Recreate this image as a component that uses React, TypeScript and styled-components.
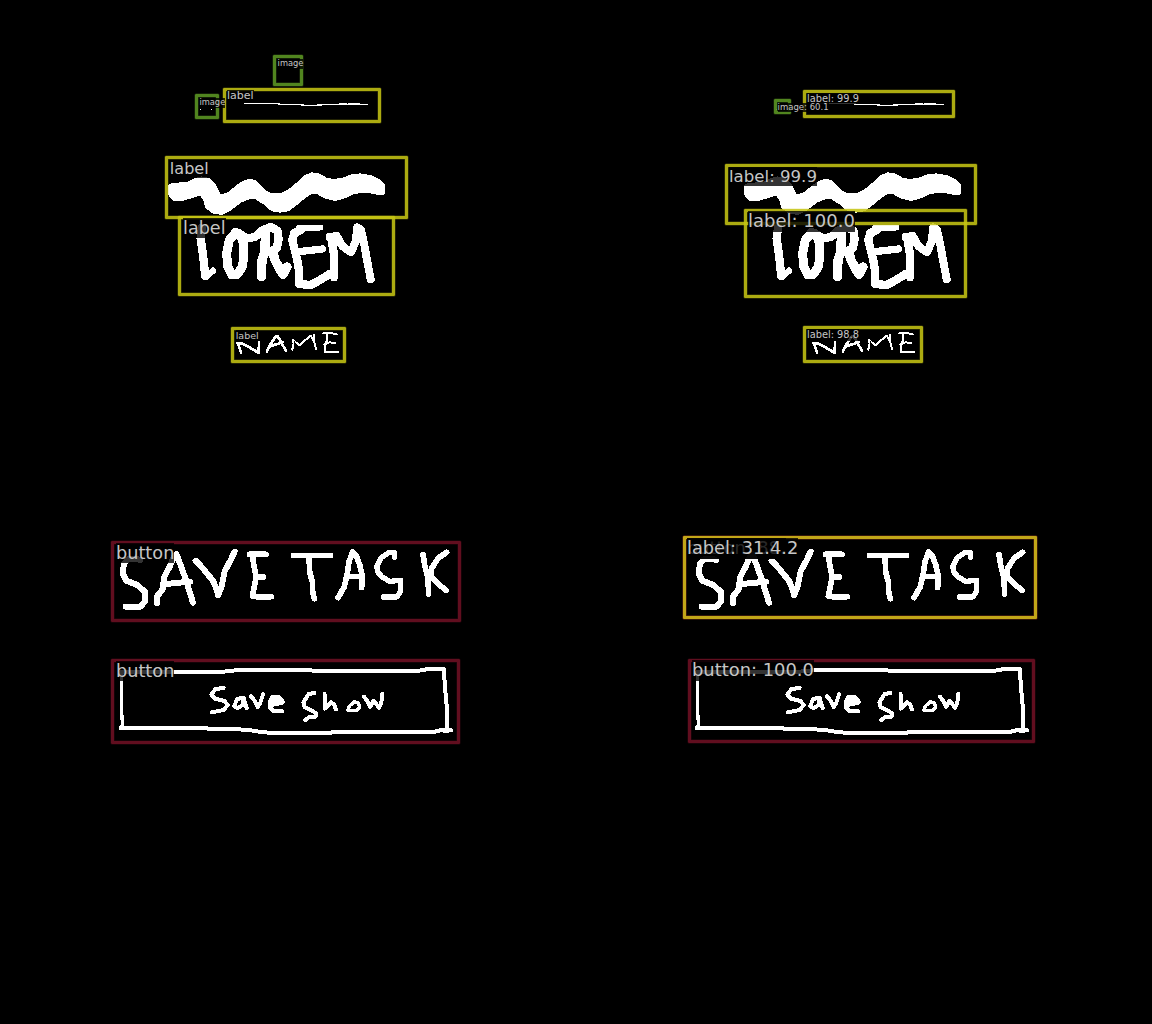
import React from "react";
import styled, { createGlobalStyle } from "styled-components";

const GlobalStyle = createGlobalStyle`
  body {
    margin: 0;
    background: #000;
  }
`;

const Board = styled.main`
  display: grid;
  grid-template-columns: 1fr 1fr;
  width: 1152px;
  height: 1024px;
  overflow: hidden;
  background: #000;
`;

const Panel = styled.section`
  position: relative;
  height: 1024px;
`;

const Drawing = styled.svg`
  display: block;
  width: 576px;
  height: 1024px;
  fill: none;
  stroke: #fff;
  stroke-linecap: round;
  stroke-linejoin: round;
  shape-rendering: crispEdges;
`;

type Kind = "image" | "label" | "button" | "mixed";

const outline: Record<Kind, string> = {
  image: "rgba(90, 148, 34, 0.9)",
  label: "rgba(198, 196, 20, 0.87)",
  button: "rgba(108, 16, 34, 0.9)",
  mixed: "#c2a618",
};

const halo: Record<Kind, string> = {
  image: "rgba(90, 148, 34, 0.4)",
  label: "rgba(198, 196, 20, 0.35)",
  button: "rgba(108, 16, 34, 0.4)",
  mixed: "rgba(130, 70, 16, 0.6)",
};

const Region = styled.div<{ $x: number; $y: number; $w: number; $h: number; $kind: Kind }>`
  position: absolute;
  box-sizing: border-box;
  left: ${(p) => p.$x}px;
  top: ${(p) => p.$y}px;
  width: ${(p) => p.$w}px;
  height: ${(p) => p.$h}px;
  border: 3px solid ${(p) => outline[p.$kind]};
  border-radius: 1px;
  box-shadow: 0 0 0 0.5px ${(p) => halo[p.$kind]}, inset 0 0 0 0.5px ${(p) => halo[p.$kind]};
`;

/* A caption is anchored by the left end of its baseline. */
const Tag = styled.span<{ $x: number; $base: number; $size: number }>`
  position: absolute;
  left: ${(p) => p.$x}px;
  top: ${(p) => p.$base - p.$size * 0.928}px;
  font-family: "DejaVu Sans", Verdana, sans-serif;
  font-size: ${(p) => p.$size}px;
  line-height: 1.164;
  white-space: pre;
  color: #c6c6c6;
  background: rgba(0, 0, 0, 0.8);
`;

interface Mark {
  kind: Kind;
  box: [number, number, number, number];
  text: string;
  at: [number, number];
  size: number;
}

const truth: Mark[] = [
  { kind: "image", box: [273, 55, 30, 31], text: "image", at: [277.6, 66.6], size: 8.3 },
  { kind: "label", box: [223, 88, 158, 35], text: "label", at: [227, 100.7], size: 11 },
  { kind: "image", box: [195, 94, 24, 25], text: "image", at: [199.4, 105.8], size: 8.3 },
  { kind: "label", box: [165, 156, 243, 63], text: "label", at: [169.8, 174.6], size: 16.1 },
  { kind: "label", box: [178, 216, 217, 80], text: "label", at: [183, 234], size: 17.6 },
  { kind: "label", box: [231, 327, 115, 36], text: "label", at: [235.7, 339], size: 9.5 },
  { kind: "button", box: [111, 541, 350, 81], text: "button", at: [116, 559], size: 17.7 },
  { kind: "button", box: [111, 659, 349, 85], text: "button", at: [116, 677], size: 17.7 },
];

const predicted: Mark[] = [
  { kind: "label", box: [227, 90, 152, 28], text: "label: 99.9", at: [231, 102], size: 9.8 },
  { kind: "image", box: [198, 99, 17, 15], text: "image: 60.1", at: [201.6, 110.4], size: 8.5 },
  { kind: "label", box: [149, 164, 252, 61], text: "label: 99.9", at: [153, 182.2], size: 16.6 },
  { kind: "label", box: [168, 209, 223, 89], text: "label: 100.0", at: [172, 227.8], size: 18 },
  { kind: "label", box: [227, 326, 120, 37], text: "label: 98.8", at: [231, 338.5], size: 9.8 },
  { kind: "button", box: [107, 536, 354, 83], text: "button: 88.", at: [111, 555], size: 17.8 },
  { kind: "mixed", box: [107, 536, 354, 83], text: "label: 31.4.2", at: [111, 555], size: 17.8 },
  { kind: "button", box: [112, 659, 347, 84], text: "button: 100.0", at: [116, 677], size: 17.9 },
];

/* Pen strokes of the wireframe sketch, each group drawn at three times its size. */
const third = (x: number, y: number) => `translate(${x} ${y}) scale(0.33333)`;

const Sketch = () => (
  <Drawing viewBox="0 0 576 1024" aria-hidden="true">
    <g transform={third(155, 45)} strokeWidth="3.4" strokeLinecap="butt">
      <path d="M267 176.5H376M369 178.5H390M387 178.5H446M438 181.5H500M485 178.5H560M552 175.5H575M562 178.5H640M578 175.5H614" />
      <path d="M135 193H139M168 193H172" />
    </g>
    <g transform={third(155, 145)}>
      <path
        fill="#fff"
        stroke="none"
        d="M38 122L50 113L95 112L115 101L140 94L165 100L180 115L190 135L197 148L215 144L250 116L270 105L290 101L305 108L330 135L350 145L375 145L400 133L430 108L450 90L470 82L490 84L515 98L535 102L560 99L590 88L615 85L650 91L672 102L688 115L691 130L688 150L670 150L640 144L600 146L570 160L540 168L510 161L485 147L470 147L450 160L420 185L400 199L375 203L350 199L325 178L300 162L285 162L260 172L225 198L200 210L170 205L150 187L145 165L135 152L115 158L85 167L55 167L41 154Z"
      />
      <g strokeWidth="25">
        <path strokeWidth="25" d="M141 248L137 280L144 330L151 394" />
        <path strokeWidth="19" d="M153 396L174 377" />
        <path strokeWidth="27" d="M241 264L223 285L215 325L218 365L231 390L247 388L262 365L267 330L266 295L256 270L241 262" />
        <path d="M250 264L276 280L300 276L322 256L347 246L367 257L371 282L365 310L350 325" />
        <path strokeWidth="28" d="M331 265L330 320L321 345L319 395" />
        <path strokeWidth="28" d="M352 318L360 345L373 370L384 388L396 366" />
        <path strokeWidth="17" d="M497 248L430 249" />
        <path d="M438 254L418 264L412 285L418 310L427 345L433 385L433 417L468 420L500 402L522 388" />
        <path strokeWidth="22" d="M430 320L502 312" />
        <path strokeWidth="24" d="M524 276L545 273L562 303L588 322L602 290L607 247L618 255L628 300L636 345L647 402" />
        <path strokeWidth="25" d="M530 285L537 330L537 397" />
      </g>
    </g>
    <g transform={third(220, 320)} strokeWidth="6">
      <path strokeWidth="8" d="M52 69L66 71L90 83L116 99M54 70L63 97M117 68L116 98" />
      <path strokeWidth="8" d="M141 94L150 75L166 51L172 48L183 65L197 92M150 79L165 74L188 67" />
      <path strokeDasharray="14 7" d="M217 89L220 70L218 59L238 76" />
      <path d="M238 76L250 65L272 47L281 60L288 87M282 45L280 60" />
      <path d="M310 40L328 38L350 43M321 43L321 62L314 76L317 95M313 73L329 67L345 69M314 96L333 97L355 95" />
    </g>
    <g transform={third(100, 530)} strokeWidth="18">
      <path d="M121 91L108 86L82 88L71 104L69 132L79 152L112 165L136 187L134 215L122 230L77 230" />
      <path d="M171 220L172 198L190 175L193 140L208 112L221 82L229 72L240 100L258 150L279 218M188 163L270 155" />
      <path d="M287 92L308 114L340 154L350 178L354 195L364 174L374 124L392 90L404 65" />
      <path strokeWidth="17" d="M498 73L448 73M458 77L462 110L469 140L464 165L457 198L480 202L514 200M470 142L490 141" />
    </g>
    <g transform={third(280, 530)} strokeWidth="17">
      <path d="M40 77L152 77M87 80L89 125L98 160L98 185L103 206" />
      <path d="M174 203L193 170L202 130L207 95L218 66L228 75L240 107L247 140L245 173M203 140L245 140" />
      <path strokeWidth="16" d="M344 82L344 68L326 68L305 82L291 107L292 124L307 142L330 154L362 151L362 184L350 201L310 201" />
      <path strokeWidth="17" d="M429 73L435 110L444 145L446 192M500 67L475 84L455 115L452 140L475 162L498 181" />
    </g>
    <g transform={third(100, 650)} strokeWidth="12">
      <path d="M63 67L360 67L390 62L460 59L610 59L640 62L958 62L985 57L1032 57" />
      <path strokeWidth="10" d="M64 65L64 170L68 232" />
      <path d="M1031 57L1035 110L1041 180L1041 238" />
      <path d="M65 234L305 235L440 239L490 247L560 250L670 250L700 247L1000 246L1020 241L1053 241" />
      <path strokeWidth="17" d="M65 233L67 233M1035 241L1042 241" />
      <path d="M371 114L346 117L334 134L345 146L373 153L384 165L370 180L335 187" />
      <path d="M431 143L411 147L403 168L412 175L428 165L431 146L440 174" />
      <path d="M453 139L466 155L473 172L481 158L489 133" />
      <path d="M512 148L509 173L522 184L547 184" />
      <path strokeWidth="18" d="M519 144L535 144L545 155L520 161" />
      <path d="M643 129L626 132L610 157L614 171L632 180L649 190L647 200L629 200L616 210" />
      <path d="M674 132L674 176L694 157L702 164L708 178" />
      <path strokeWidth="10" d="M764 155L748 168L744 180L768 182L779 173L776 160L764 155" />
      <path d="M792 140L803 154L810 171L821 152L837 173L844 158L847 131" />
    </g>
  </Drawing>
);

const Scene = ({ marks }: { marks: Mark[] }) => (
  <Panel>
    <Sketch />
    {marks.map((m, i) => (
      <Region key={i} $x={m.box[0]} $y={m.box[1]} $w={m.box[2]} $h={m.box[3]} $kind={m.kind} />
    ))}
    {marks.map((m, i) => (
      <Tag key={i} $x={m.at[0]} $base={m.at[1]} $size={m.size}>
        {m.text}
      </Tag>
    ))}
  </Panel>
);

export default function App() {
  return (
    <>
      <GlobalStyle />
      <Board>
        <Scene marks={truth} />
        <Scene marks={predicted} />
      </Board>
    </>
  );
}
